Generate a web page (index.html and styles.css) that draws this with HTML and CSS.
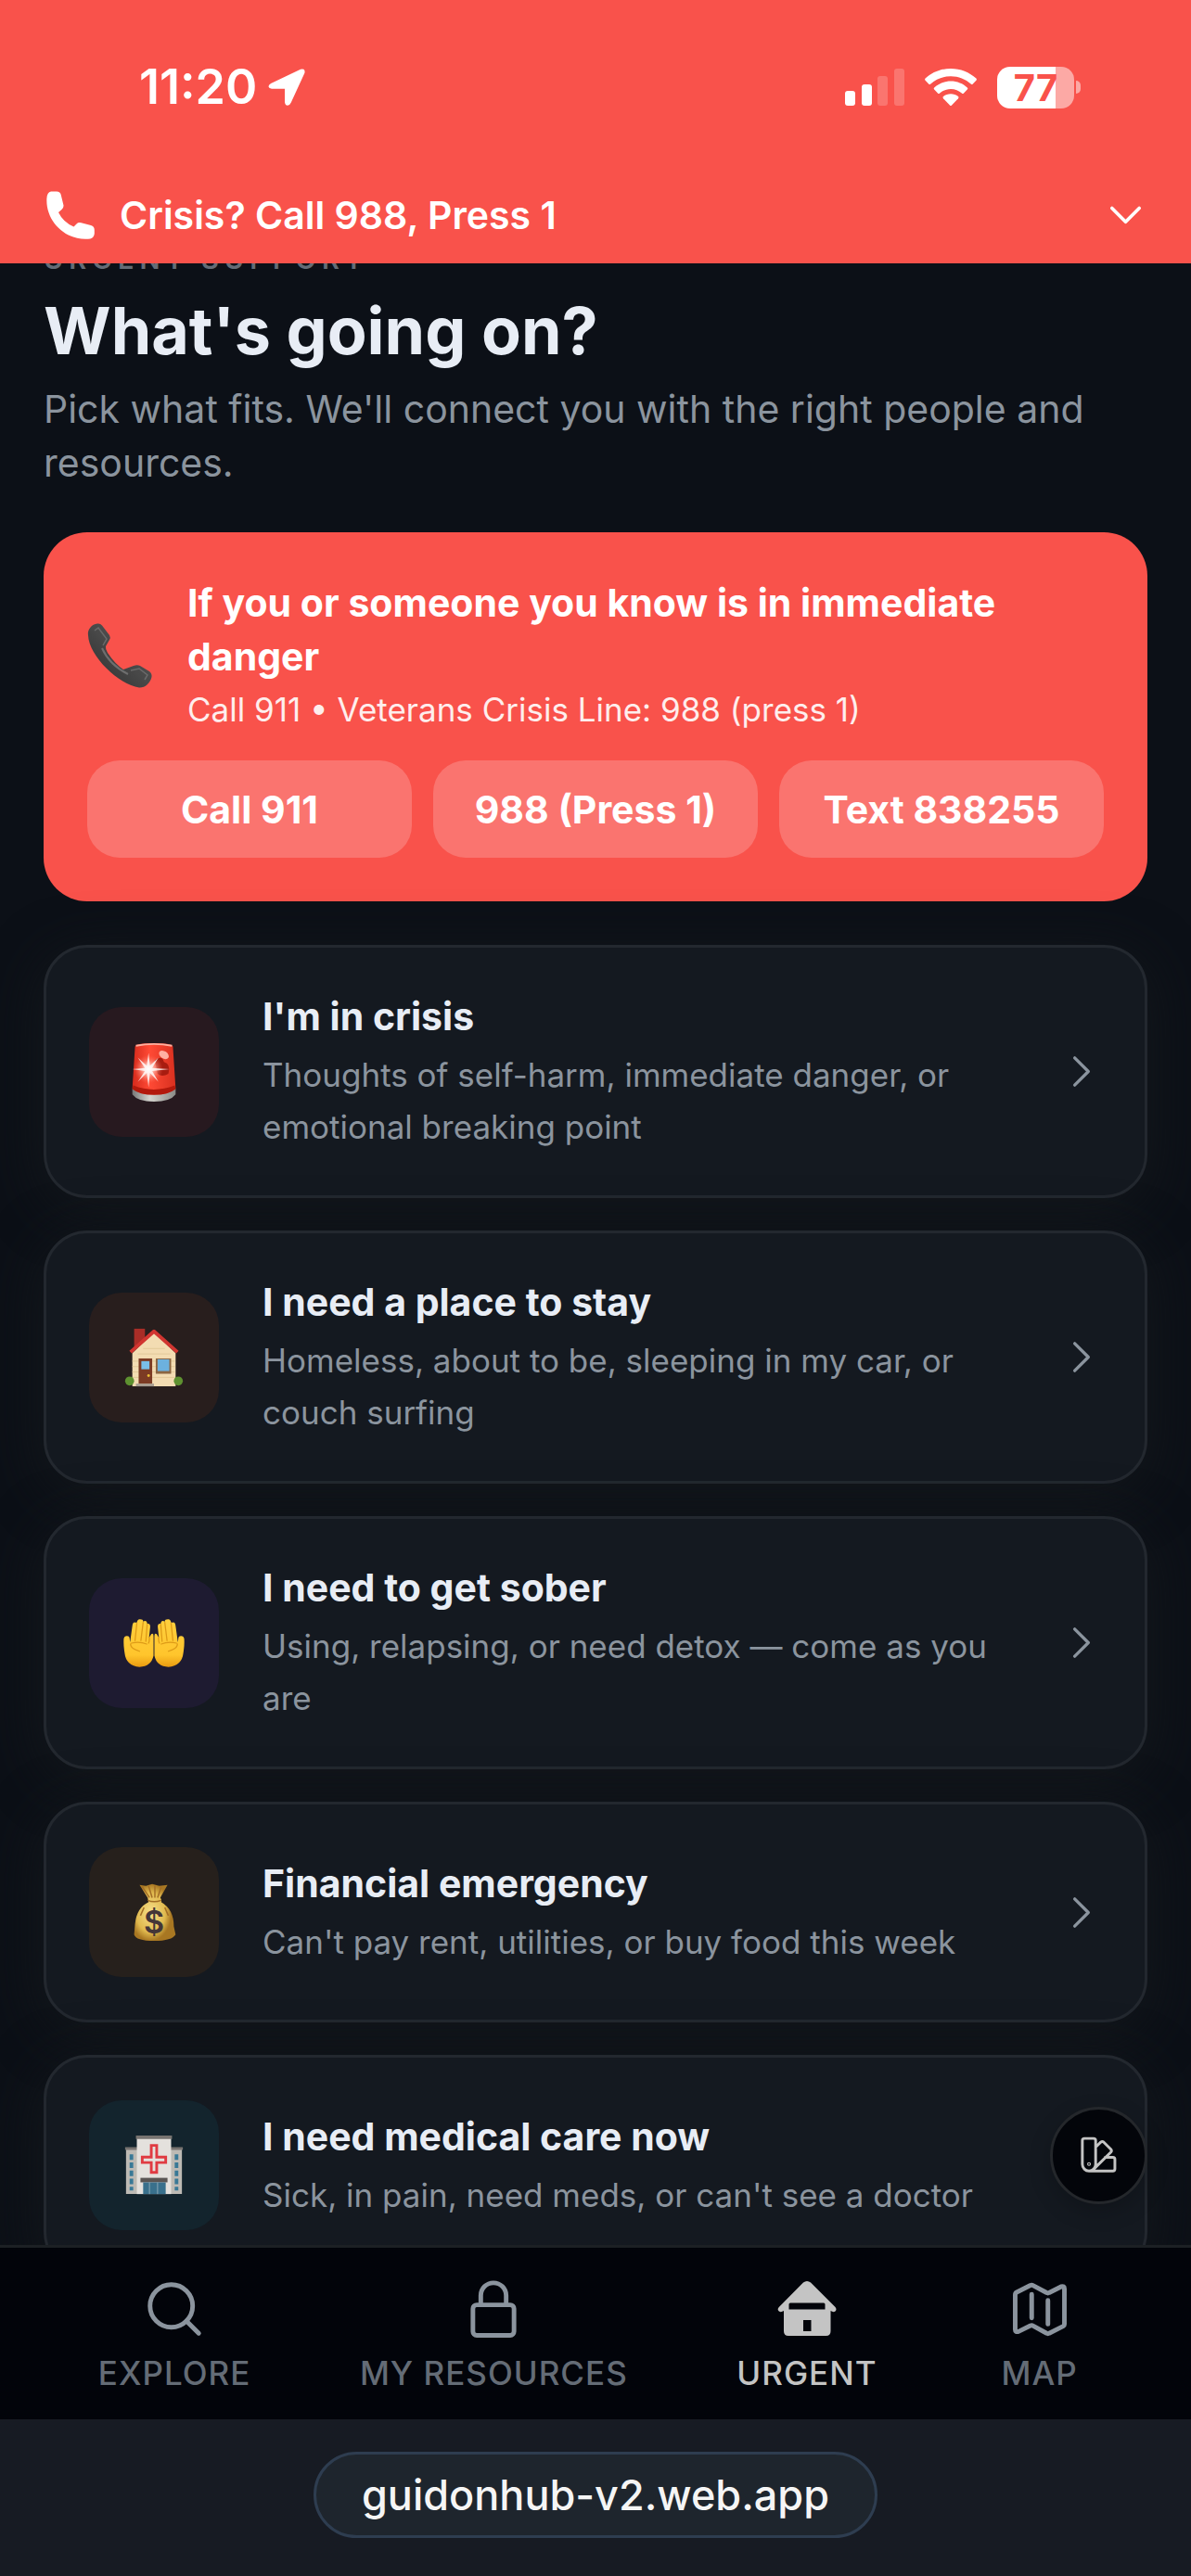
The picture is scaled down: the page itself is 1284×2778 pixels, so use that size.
FILE: index.html
```html
<!DOCTYPE html>
<html lang="en">
<head>
<meta charset="utf-8">
<meta name="viewport" content="width=device-width, initial-scale=1">
<title>Urgent support</title>
<link rel="stylesheet" href="styles.css">
</head>
<body>
<div class="app">
  <header class="top">
    <div class="status">
      <div class="status-left">
        <span class="time">11:20</span>
        <svg class="arrow" viewBox="0 0 40 40" aria-hidden="true"><path d="M35 0.8 L3 16 Q0.3 17.500 0.500 19.500 Q1 21.600 4 21.800 H18 V36 Q18.300 39.500 21 39.700 Q23.600 39.500 24.800 36.500 L39.500 4.500 Q40 2 38.500 .8 Q37 0 35 .8Z" fill="#fff"/></svg>
      </div>
      <div class="status-right">
        <svg class="signal" viewBox="0 0 64 40" fill="#fff" aria-hidden="true"><rect x="0" y="24" width="11" height="16" rx="3"/><rect x="18" y="17" width="11" height="23" rx="3"/><g opacity=".2"><rect x="35" y="8" width="11" height="32" rx="3"/><rect x="53" y="0" width="11" height="40" rx="3"/></g></svg>
        <svg class="wifi" viewBox="0 0 56 40" fill="#fff" aria-hidden="true"><path d="M28 0C17.500 0 7.800 4 .6 10.600Q-.4 11.600 .6 12.700L4.200 16.500Q5.200 17.500 6.300 16.500C12 11.300 19.600 8.200 28 8.200S44 11.300 49.700 16.500Q50.800 17.500 51.800 16.500L55.400 12.700Q56.400 11.600 55.400 10.600C48.200 4 38.500 0 28 0Z"/><path d="M28 13.600C21 13.600 14.800 16.300 10.200 20.500Q9.200 21.500 10.200 22.600L14 26.500Q15 27.500 16.100 26.500C19.200 23.700 23.400 21.900 28 21.900S36.800 23.700 39.900 26.500Q41 27.500 42 26.500L45.800 22.600Q46.800 21.500 45.800 20.500C41.200 16.300 35 13.600 28 13.600Z"/><path d="M28 27.200C25 27.200 22.200 28.200 20 30Q19 31 20 32.200L27 39.400Q28 40.400 29 39.400L36 32.200Q37 31 36 30C33.800 28.200 31 27.200 28 27.200Z"/></svg>
        <div class="battery"><span class="battery-body">77</span><span class="battery-tip"></span></div>
      </div>
    </div>
    <button class="crisis-bar" type="button">
      <svg class="crisis-phone" viewBox="0 0 52 52" aria-hidden="true"><path d="M5 .5H11Q15 .5 15.700 4L18.400 15Q19 18 16.500 20L13 23Q18 33.500 29.500 38.500L32.500 35.500Q34.500 33.400 37.500 34.300L48 37Q51.800 38.200 51.800 42V46Q51.300 51.500 45 51.700C20 53.500 -1 32 .4 8Q.8 1 5 .5Z" fill="#fff"/></svg>
      <span class="crisis-text">Crisis? Call 988, Press 1</span>
      <svg class="caret" viewBox="0 0 256 256" fill="none" stroke="#fff" stroke-width="20" stroke-linecap="round" stroke-linejoin="round" aria-hidden="true"><path d="M208 90l-80 80-80-80"/></svg>
    </button>
  </header>

  <main class="content">
    <p class="eyebrow">URGENT SUPPORT</p>
    <h1 class="title">What's going on?</h1>
    <p class="lead">Pick what fits. We'll connect you with the right people and resources.</p>

    <section class="alert">
      <div class="alert-head">
        <svg class="alert-icon" viewBox="0 0 70 70" aria-hidden="true"><defs><linearGradient id="ph" x1="0" y1="1" x2="1" y2="0"><stop offset="0" stop-color="#2c2c2c"/><stop offset=".5" stop-color="#484848"/><stop offset="1" stop-color="#5c5c5c"/></linearGradient></defs><path d="M1 13C0 7 5 1 11 .5Q14 0 16 2.500L24 13Q25.500 15.500 24 18L20 25Q19.500 28 22 32Q30 44 39 50L50 46Q54 44.500 57 46L67 52Q70 54.500 69.500 58C68 65 62 70 56 69.500C34 66 2 36 1 13Z" fill="url(#ph)"/><path d="M8 8 12 5 21 17 17 24M47 51 56 49 65 56 62 61" fill="none" stroke="#6a6a6a" stroke-width="1.500"/><path d="M16 27Q24 45 44 55" fill="none" stroke="#6e6e6e" stroke-width="2"/></svg>
        <div class="alert-copy">
          <h2 class="alert-title">If you or someone you know is in immediate danger</h2>
          <p class="alert-sub">Call 911 • Veterans Crisis Line: 988 (press 1)</p>
        </div>
      </div>
      <div class="alert-actions">
        <button class="action" type="button">Call 911</button>
        <button class="action" type="button">988 (Press 1)</button>
        <button class="action" type="button">Text 838255</button>
      </div>
    </section>

    <div class="cards">
      <a class="card" href="#crisis">
        <span class="tile tile-red"><svg viewBox="0 0 72 72" aria-hidden="true"><defs><linearGradient id="s1" x1="0" x2="1"><stop offset="0" stop-color="#d42a1c"/><stop offset=".4" stop-color="#ff4a35"/><stop offset="1" stop-color="#d8301f"/></linearGradient><linearGradient id="s2" x1="0" x2="1"><stop offset="0" stop-color="#777"/><stop offset=".4" stop-color="#d5d5cf"/><stop offset="1" stop-color="#8a8a86"/></linearGradient><radialGradient id="s3"><stop offset="0" stop-color="#fff"/><stop offset=".35" stop-color="#ffc9bd" stop-opacity=".8"/><stop offset="1" stop-color="#ff6a55" stop-opacity="0"/></radialGradient></defs><path d="M12 54Q36 64 60 54V61Q54 69 36 69Q18 69 12 61Z" fill="url(#s2)"/><path d="M15 8Q15 4 36 4T57 8L60 54Q54 61 36 61Q18 61 12 54Z" fill="url(#s1)"/><path d="M13 51Q36 60 59 51L60 55Q52 61.500 36 61.500Q20 61.500 12 55Z" fill="#b3190c"/><path d="M16 7Q36 3 56 7" stroke="#ffaf9f" stroke-width="2" fill="none"/><path d="M37 23Q45 17 47 25Q55 27 52 38Q45 42 40 38Z" fill="#a81c10"/><ellipse cx="47" cy="17" rx="6" ry="4" transform="rotate(35 47 17)" fill="#ffb0a2"/><circle cx="30" cy="33" r="16" fill="url(#s3)"/><path d="M30 15 31.500 29 41 20 34 31.500 53 33 34 35 41 47 31.500 37 30 53 28 37 18 47 26 35 12 33 26 31.500 18 20 28 29Z" fill="#fff" opacity=".8"/></svg></span>
        <span class="copy"><strong class="card-title">I'm in crisis</strong><span class="card-text">Thoughts of self-harm, immediate danger, or emotional breaking point</span></span>
        <svg class="caret" viewBox="0 0 256 256" aria-hidden="true"><path d="M96 48l80 80-80 80"/></svg>
      </a>
      <a class="card" href="#housing">
        <span class="tile tile-orange"><svg viewBox="0 0 72 72" aria-hidden="true"><rect x="14" y="4" width="12" height="20" fill="#a92d27"/><path d="M12 31 36 8 60 31V68H12Z" fill="#f3dcb2"/><path d="M12 40H59M12 46H59M12 52H59M12 58H59M18 32H54M24 26H48" stroke="#e2c898" stroke-width="1"/><path d="M10 30 36 7 62 30" fill="none" stroke="#d13530" stroke-width="4" stroke-linejoin="round"/><circle cx="9" cy="62" r="5" fill="#5e9130"/><circle cx="63" cy="62" r="5" fill="#5e9130"/><rect x="19" y="37" width="15" height="28" fill="#7c3b24"/><rect x="22" y="40" width="9" height="9" fill="#79bfe9"/><circle cx="30" cy="56" r="1.500" fill="#eabf34"/><rect x="38" y="37" width="17" height="17" fill="#8c6642"/><rect x="40" y="38" width="13" height="13" fill="#6cb1de"/><rect x="16" y="65" width="20" height="3" fill="#a69c90"/></svg></span>
        <span class="copy"><strong class="card-title">I need a place to stay</strong><span class="card-text">Homeless, about to be, sleeping in my car, or couch surfing</span></span>
        <svg class="caret" viewBox="0 0 256 256" aria-hidden="true"><path d="M96 48l80 80-80 80"/></svg>
      </a>
      <a class="card" href="#sober">
        <span class="tile tile-purple"><svg viewBox="0 0 72 72" aria-hidden="true"><defs><linearGradient id="h1" x1="0" y1="0" x2="0" y2="1"><stop offset="0" stop-color="#ffcf3e"/><stop offset=".75" stop-color="#ffc52c"/><stop offset="1" stop-color="#e89a10"/></linearGradient><g id="hand"><path d="M2.500 31Q3 28 6 28Q9 28 9 31L9.500 35 12 17Q12.500 12.500 15 13L17 13Q18 9 20.500 9.500Q24 9.500 24 12Q28 10 28.500 14.500Q32 14 31.800 18L30.500 30 33 26Q35.500 24 35.500 29V50Q33 62 20 62.500Q5 61 3.500 47Q2 38 2.500 31Z" fill="url(#h1)"/><path d="M17 14 15 33M24 13 21.500 33M28.500 15 27 34M31 30Q31 34 30 36M10 37Q10 42 20 45M11 36Q20 34 28 37" fill="none" stroke="#dd9a17" stroke-width="1.300" stroke-linecap="round"/></g></defs><use href="#hand"/><use href="#hand" transform="translate(72 0) scale(-1 1)"/></svg></span>
        <span class="copy"><strong class="card-title">I need to get sober</strong><span class="card-text">Using, relapsing, or need detox — come as you are</span></span>
        <svg class="caret" viewBox="0 0 256 256" aria-hidden="true"><path d="M96 48l80 80-80 80"/></svg>
      </a>
      <a class="card" href="#money">
        <span class="tile tile-amber"><svg viewBox="0 0 72 72" aria-hidden="true"><defs><radialGradient id="m1" cx=".4"><stop offset="0" stop-color="#f7e08a"/><stop offset=".7" stop-color="#e0b94e"/><stop offset="1" stop-color="#a87722"/></radialGradient></defs><path d="M20 6 27 7 34 5 42 7 51 6 43 20Q45 23 44 25Q58 33 58 52L60 61Q56 68 36 68T14 61L15 49Q17 31 30 25L29 20Z" fill="url(#m1)"/><path d="M23 8 31 20M30 7 34 20M37 7 37 20M44 8 40 20M29 23Q36 26 44 23M25 31 21 40M48 31 52 40" fill="none" stroke="#a26d25" stroke-width="1.500"/><text x="36" y="60" text-anchor="middle" class="dollar">$</text></svg></span>
        <span class="copy"><strong class="card-title">Financial emergency</strong><span class="card-text">Can't pay rent, utilities, or buy food this week</span></span>
        <svg class="caret" viewBox="0 0 256 256" aria-hidden="true"><path d="M96 48l80 80-80 80"/></svg>
      </a>
      <a class="card" href="#medical">
        <span class="tile tile-teal"><svg viewBox="0 0 72 72" aria-hidden="true"><path d="M5 17H67V68H5Z" fill="#bdbab4"/><path d="M4 16H68V19H4Z" fill="#777370"/><rect x="17" y="5" width="38" height="63" fill="#e4e1dd"/><path d="M16 3H56V7H16Z" fill="#777370"/><path d="M11 24V64M61 24V64" stroke="#397996" stroke-width="4" stroke-dasharray="6 3"/><path d="M33 14H39V27H49V33H39V44H33V33H23V27H33Z" fill="#e4e1dd" stroke="#e03b42" stroke-width="3"/><rect x="21" y="50" width="30" height="5" fill="#5b5654"/><rect x="24" y="55" width="25" height="13" fill="#39708c"/><path d="M31 55V68M40 55V68" stroke="#8caab8" stroke-width="1"/></svg></span>
        <span class="copy"><strong class="card-title">I need medical care now</strong><span class="card-text">Sick, in pain, need meds, or can't see a doctor</span></span>
        <svg class="caret" viewBox="0 0 256 256" aria-hidden="true"><path d="M96 48l80 80-80 80"/></svg>
      </a>
    </div>
  </main>

  <footer class="bottom">
    <button class="theme" type="button" aria-label="Change theme"><svg viewBox="0 0 256 256" aria-hidden="true"><path d="M44 28H98A12 12 0 0 1 110 40V180A39 39 0 0 1 32 180V40A12 12 0 0 1 44 28ZM110 79L140 50Q149 43 158 50L199 91Q207 100 199 109L98 209M166 139H211A12 12 0 0 1 223 151V207A12 12 0 0 1 211 219H71"/><circle cx="71" cy="178" r="3"/></svg></button>
    <nav class="tabs">
      <a class="tab" href="#explore"><svg viewBox="0 0 256 256" aria-hidden="true"><circle cx="116" cy="116" r="84"/><path d="M175.400 175.400 224 224"/></svg><span>EXPLORE</span></a>
      <a class="tab" href="#resources"><svg viewBox="0 0 256 256" aria-hidden="true"><rect x="47" y="112" width="162" height="120" rx="15"/><path d="M78 112V75a50 50 0 0 1 100 0V112"/></svg><span>MY RESOURCES</span></a>
      <a class="tab tab-active" href="#urgent"><svg viewBox="0 0 70 70" aria-hidden="true"><path fill-rule="evenodd" d="M31 6.500Q35 3.500 39 6.500L65.500 33Q67.500 35.500 65.500 37.500Q63.500 39 60.500 37V59Q60.500 64 55.500 64H15Q10 64 10 59V37Q7 39 4.800 37.500Q2.500 35.500 4.800 33ZM17 28.500Q15.500 28.500 15.500 30V35.500H54.500V30Q54.500 28.500 53 28.500ZM31 47H39.500V59H31Z"/></svg><span>URGENT</span></a>
      <a class="tab" href="#map"><svg viewBox="0 0 256 256" aria-hidden="true"><path d="M37 62 91 35Q96 32 101 35L155 64Q160 67 165 64L212 40Q225 36 225 48V188Q225 193 220 196L165 224Q160 227 155 224L101 194Q96 191 91 194L44 217Q31 221 31 209V72Q31 65 37 62ZM96 70V164M160 94V188"/></svg><span>MAP</span></a>
    </nav>
    <div class="browser"><button class="url" type="button">guidonhub-v2.web.app</button></div>
  </footer>
</div>
</body>
</html>
```
FILE: styles.css
```css
* { box-sizing: border-box; }

body {
  margin: 0;
  background: #0c1017;
  color: #e8edf5;
  font-family: Inter, "Liberation Sans", sans-serif;
}

h1, h2, p { margin: 0; }
button { border: 0; padding: 0; font: inherit; color: inherit; }
a { color: inherit; text-decoration: none; }
svg { display: block; flex: none; }

.app { height: 100vh; display: flex; flex-direction: column; }

/* Status bar and crisis line */
.top { flex: none; position: relative; z-index: 1; background: #f9524b; color: #fff; }
.status { display: flex; justify-content: space-between; padding: 64px 119px 0 150px; }
.status-left, .status-right { display: flex; align-items: center; height: 60px; }
.status-left { gap: 12px; }
.time { font-size: 52px; font-weight: 600; line-height: 60px; }
.arrow { width: 40px; height: 40px; }
.signal { width: 64px; height: 40px; margin-right: 22px; }
.wifi { width: 56px; height: 40px; margin-right: 22px; }
.battery { display: flex; align-items: center; gap: 2px; }
.battery-body {
  width: 83px; height: 45px; border-radius: 14px;
  background: linear-gradient(90deg, #fff 63px, #fca9a5 63px);
  color: #f9524b; font-size: 40px; font-weight: 700; line-height: 45px; text-align: center;
}
.battery-tip { width: 5px; height: 14px; border-radius: 0 7px 7px 0; background: #fca9a5; }
.crisis-bar {
  display: flex; align-items: center; width: 100%; height: 105px; margin-top: 55px;
  padding: 0 47px 0 50px; background: none; text-align: left;
}
.crisis-phone { width: 52px; height: 52px; margin-right: 27px; }
.crisis-text { flex: 1; font-size: 41px; font-weight: 600; }
.caret { width: 47px; height: 47px; }

/* Page content, scrolled under the header */
.content { flex: 1; min-height: 0; overflow: hidden; padding: 0 47px; }
.eyebrow {
  margin-top: -28px; color: #646c76; font-size: 29px; font-weight: 600;
  line-height: 48px; letter-spacing: 6px;
}
.title { margin-top: 11px; font-size: 70px; font-weight: 700; line-height: 84px; }
.lead { margin-top: 13px; color: #8b949e; font-size: 41px; line-height: 58px; }

.alert { margin-top: 46px; padding: 47px; border-radius: 47px; background: #f9524b; color: #fff; }
.alert-head { display: flex; align-items: center; gap: 38px; }
.alert-icon { width: 70px; height: 70px; }
.alert-title { font-size: 41px; font-weight: 700; line-height: 58px; }
.alert-sub { font-size: 35px; line-height: 56px; opacity: .9; }
.alert-actions { display: grid; grid-template-columns: repeat(3, 1fr); gap: 23px; margin-top: 27px; }
.action {
  height: 105px; border-radius: 35px; background: rgba(255, 255, 255, .2);
  font-size: 41px; font-weight: 700;
}

.cards { display: flex; flex-direction: column; gap: 35px; margin-top: 47px; }
.card {
  display: flex; align-items: center; gap: 47px; padding: 46px;
  border: 3px solid #23282f; border-radius: 47px; background: #141920;
  box-shadow: 0 12px 60px #14181c;
}
.tile { flex: none; display: grid; place-items: center; width: 140px; height: 140px; border-radius: 35px; }
.tile svg { width: 70px; height: 70px; }
.tile-red { background: #27191f; }
.tile-orange { background: #281e1d; }
.tile-purple { background: #1e1b31; }
.tile-amber { background: #26201c; }
.tile-teal { background: #13242d; }
.dollar { fill: #443638; font: 600 35px Inter, sans-serif; }
.copy { flex: 1; display: flex; flex-direction: column; gap: 6px; }
.card-title { font-size: 41px; font-weight: 700; line-height: 57px; }
.card-text { color: #8b949e; font-size: 35px; line-height: 56px; }
.card .caret, .tab svg, .theme svg { fill: none; stroke: #8b949e; stroke-width: 18; stroke-linecap: round; stroke-linejoin: round; }

/* Tab bar and browser bar */
.bottom { flex: none; position: relative; z-index: 1; }
.theme {
  position: absolute; right: 47px; bottom: 401px; display: grid; place-items: center;
  width: 105px; height: 105px; border: 3px solid #24272b; border-radius: 50%;
  background: #03050a; box-shadow: 0 8px 24px rgba(0, 0, 0, .2);
}
.theme svg { width: 47px; height: 47px; stroke: #c4c4c4; stroke-width: 16; }
.tabs {
  display: flex; justify-content: space-around; height: 188px; padding: 31px 47px 0;
  border-top: 3px solid #1c2024; background: #02040a;
}
.tab {
  display: flex; flex-direction: column; align-items: center; gap: 10px; min-width: 115px;
  color: #646c76; font-size: 35px; font-weight: 500; line-height: 48px; letter-spacing: 1px;
}
.tab svg { width: 70px; height: 70px; }
.tab-active { color: #c4c4c4; }
.tab-active svg { fill: #c4c4c4; stroke: none; }
.browser { display: flex; justify-content: center; height: 169px; padding-top: 35px; background: #171b23; }
.url {
  height: 93px; padding: 0 49px; border: 3px solid #2e3d50; border-radius: 47px;
  background: #1e252d; color: #f5f5f5; font-size: 45px; font-weight: 500;
}
```
